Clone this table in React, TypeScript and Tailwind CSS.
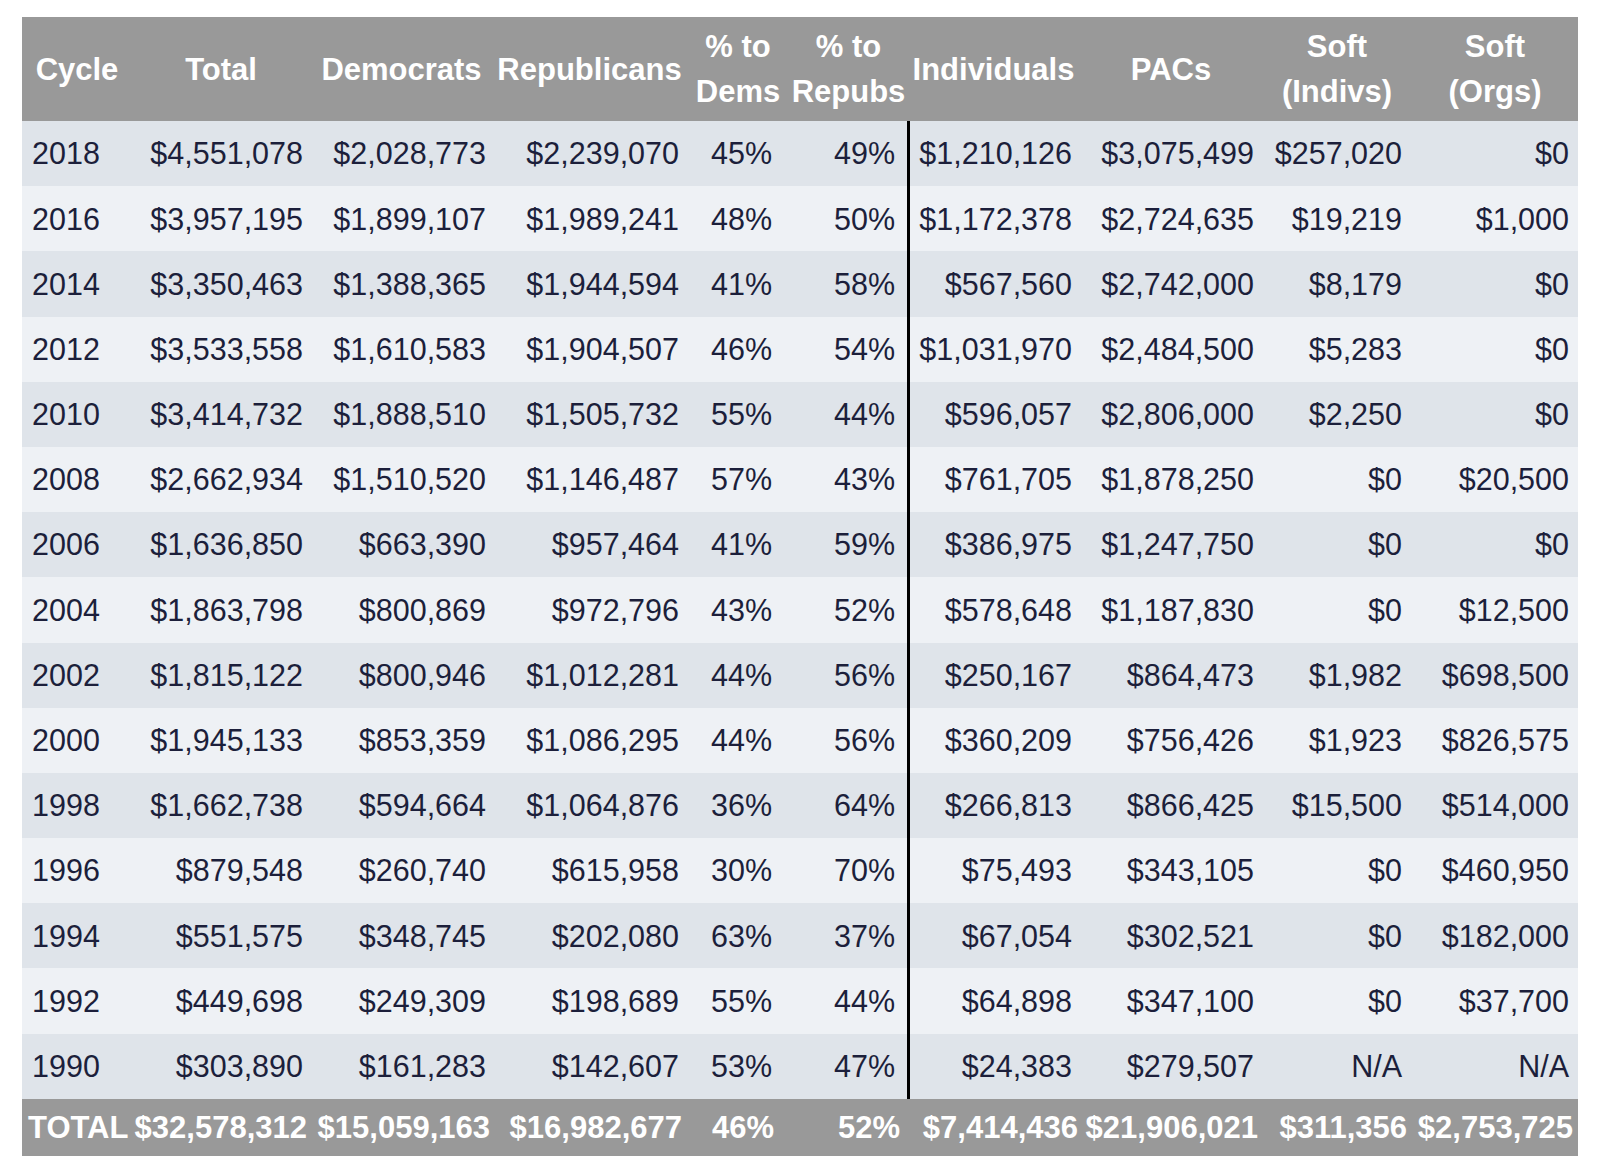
const headers: string[][] = [
  ["Cycle"],
  ["Total"],
  ["Democrats"],
  ["Republicans"],
  ["% to", "Dems"],
  ["% to", "Repubs"],
  ["Individuals"],
  ["PACs"],
  ["Soft", "(Indivs)"],
  ["Soft", "(Orgs)"],
];

const rows: string[][] = [
  ["2018", "$4,551,078", "$2,028,773", "$2,239,070", "45%", "49%", "$1,210,126", "$3,075,499", "$257,020", "$0"],
  ["2016", "$3,957,195", "$1,899,107", "$1,989,241", "48%", "50%", "$1,172,378", "$2,724,635", "$19,219", "$1,000"],
  ["2014", "$3,350,463", "$1,388,365", "$1,944,594", "41%", "58%", "$567,560", "$2,742,000", "$8,179", "$0"],
  ["2012", "$3,533,558", "$1,610,583", "$1,904,507", "46%", "54%", "$1,031,970", "$2,484,500", "$5,283", "$0"],
  ["2010", "$3,414,732", "$1,888,510", "$1,505,732", "55%", "44%", "$596,057", "$2,806,000", "$2,250", "$0"],
  ["2008", "$2,662,934", "$1,510,520", "$1,146,487", "57%", "43%", "$761,705", "$1,878,250", "$0", "$20,500"],
  ["2006", "$1,636,850", "$663,390", "$957,464", "41%", "59%", "$386,975", "$1,247,750", "$0", "$0"],
  ["2004", "$1,863,798", "$800,869", "$972,796", "43%", "52%", "$578,648", "$1,187,830", "$0", "$12,500"],
  ["2002", "$1,815,122", "$800,946", "$1,012,281", "44%", "56%", "$250,167", "$864,473", "$1,982", "$698,500"],
  ["2000", "$1,945,133", "$853,359", "$1,086,295", "44%", "56%", "$360,209", "$756,426", "$1,923", "$826,575"],
  ["1998", "$1,662,738", "$594,664", "$1,064,876", "36%", "64%", "$266,813", "$866,425", "$15,500", "$514,000"],
  ["1996", "$879,548", "$260,740", "$615,958", "30%", "70%", "$75,493", "$343,105", "$0", "$460,950"],
  ["1994", "$551,575", "$348,745", "$202,080", "63%", "37%", "$67,054", "$302,521", "$0", "$182,000"],
  ["1992", "$449,698", "$249,309", "$198,689", "55%", "44%", "$64,898", "$347,100", "$0", "$37,700"],
  ["1990", "$303,890", "$161,283", "$142,607", "53%", "47%", "$24,383", "$279,507", "N/A", "N/A"],
];

const totals = ["TOTAL", "$32,578,312", "$15,059,163", "$16,982,677", "46%", "52%", "$7,414,436", "$21,906,021", "$311,356", "$2,753,725"];

// column widths + how the body cells sit in them
const colWidths = [
  "w-[110px]", "w-[178px]", "w-[183px]", "w-[193px]", "w-[104px]",
  "w-[117px]", "w-[173px]", "w-[182px]", "w-[150px]", "w-[166px]",
];

const cellAlign = [
  "text-left pl-[10px]",
  "text-right pr-[7px]",
  "text-right pr-[7px]",
  "text-right pr-[7px]",
  "text-left pl-[25px]",
  "text-right pr-[12px]",
  "text-right pr-[8px]",
  "text-right pr-[8px]",
  "text-right pr-[10px]",
  "text-right pr-[9px]",
];

// totals are bold and sit a little closer to the right edge
const totalAlign = [
  "text-left pl-[6px]",
  "text-right pr-[3px]",
  "text-right pr-[3px]",
  "text-right pr-[4px]",
  "text-left pl-[26px]",
  "text-right pr-[7px]",
  "text-right pr-[2px]",
  "text-right pr-[4px]",
  "text-right pr-[5px]",
  "text-right pr-[5px]",
];

export default function App() {
  return (
    <div className="min-h-[1172px] bg-white pl-[22px] pt-[17px] font-['Liberation_Sans',Arial,sans-serif]">
      <table className="table-fixed border-separate border-spacing-0 w-[1556px]">
        <colgroup>
          {colWidths.map((w, i) => (
            <col key={i} className={w} />
          ))}
        </colgroup>
        <thead>
          <tr className="h-[104px] bg-[#999999]">
            {headers.map((lines, i) => (
              <th
                key={i}
                className="p-0 text-center align-middle text-[31px] font-bold text-white leading-[45px] whitespace-nowrap"
              >
                {lines.map((l, j) => (
                  <div key={j}>{l}</div>
                ))}
              </th>
            ))}
          </tr>
        </thead>
        <tbody>
          {rows.map((row, r) => (
            <tr
              key={row[0]}
              className={r % 2 === 0 ? "h-[65.2px] bg-[#dfe4ea]" : "h-[65.2px] bg-[#eef1f5]"}
            >
              {row.map((cell, c) => (
                <td
                  key={c}
                  className={
                    "py-0 align-middle text-[30.5px] leading-none whitespace-nowrap text-[#1c1f3b] " +
                    cellAlign[c] +
                    (c === 6 ? " border-l-[3px] border-black" : "")
                  }
                >
                  {cell}
                </td>
              ))}
            </tr>
          ))}
          <tr className="h-[57px] bg-[#999999]">
            {totals.map((cell, c) => (
              <td
                key={c}
                className={
                  "py-0 align-middle text-[31px] leading-none whitespace-nowrap font-bold text-white " +
                  totalAlign[c]
                }
              >
                {cell}
              </td>
            ))}
          </tr>
        </tbody>
      </table>
    </div>
  );
}
